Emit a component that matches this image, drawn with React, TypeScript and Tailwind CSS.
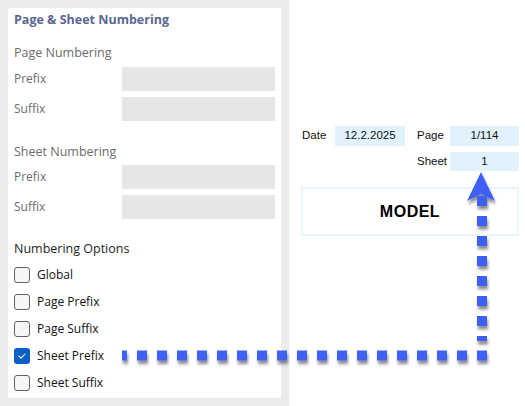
import React from 'react';

const sans = { fontFamily: '"Open Sans", "Noto Sans", sans-serif' };

function Field({ label }: { label: string }) {
  return (
    <div className="flex h-[24px] items-center">
      <span className="w-[108px] text-[12px] text-[#6b6b6b]">{label}</span>
      <div className="h-full w-[153px] bg-[#e6e6e6]" />
    </div>
  );
}

function Check({ label, checked = false }: { label: string; checked?: boolean }) {
  return (
    <div className="flex h-[27px] items-center gap-[7px]">
      {checked ? (
        <span className="flex h-[16px] w-[16px] items-center justify-center rounded-[3px] bg-[#0b5fc5]">
          <svg width="10" height="10" viewBox="0 0 10 10" fill="none">
            <path d="M2 5.2 L4.1 7.2 L8 3" stroke="white" strokeWidth="1.1" strokeLinecap="round" strokeLinejoin="round" />
          </svg>
        </span>
      ) : (
        <span className="h-[16px] w-[16px] rounded-[3px] border border-[#626262] bg-[#f6f6f6]" />
      )}
      <span className="text-[12px] text-[#111]">{label}</span>
    </div>
  );
}

function Arrow() {
  return (
    <svg className="pointer-events-none absolute left-0 top-0" width="525" height="406" viewBox="0 0 525 406">
      <defs>
        <filter id="shade" x="-50%" y="-50%" width="200%" height="200%">
          <feDropShadow dx="1" dy="3.5" stdDeviation="1.8" floodColor="#000" floodOpacity="0.45" />
        </filter>
      </defs>
      <g filter="url(#shade)" fill="#3f5ff7" stroke="#3f5ff7">
        <path d="M122 355.5 H487" strokeWidth="10" strokeDasharray="10 10" strokeDashoffset="5" fill="none" />
        <path d="M482 341 V196" strokeWidth="10" strokeDasharray="10 10" strokeDashoffset="5" fill="none" />
        <path d="M481 172 L495 201 L481 194 L467 201 Z" stroke="none" />
      </g>
    </svg>
  );
}

export default function App() {
  return (
    <div className="relative flex h-[406px] w-[525px] overflow-hidden bg-[#ebebeb]">
      <div className="w-[289px] p-[8px] pr-[8px]">
        <div className="h-[390px] w-[273px] bg-white px-[6px]" style={sans}>
          <div className="flex h-[24px] items-center text-[12.5px] font-bold text-[#5a6890]">
            Page &amp; Sheet Numbering
          </div>

          <div className="mt-[11px] flex h-[20px] items-center text-[12.5px] text-[#6b6b6b]">Page Numbering</div>
          <div className="mt-[4px] flex flex-col gap-[6px]">
            <Field label="Prefix" />
            <Field label="Suffix" />
          </div>

          <div className="mt-[21px] flex h-[20px] items-center text-[12.5px] text-[#6b6b6b]">Sheet Numbering</div>
          <div className="mt-[3px] flex flex-col gap-[6px]">
            <Field label="Prefix" />
            <Field label="Suffix" />
          </div>

          <div className="mt-[20px] flex h-[20px] items-center text-[12.5px] text-[#1e1e1e]">Numbering Options</div>
          <div className="mt-[2px]">
            <Check label="Global" />
            <Check label="Page Prefix" />
            <Check label="Page Suffix" />
            <Check label="Sheet Prefix" checked />
            <Check label="Sheet Suffix" />
          </div>
        </div>
      </div>

      <div
        className="flex-1 bg-white pl-[12px] pt-[126px] text-[11.5px] text-[#111]"
        style={{ fontFamily: '"Liberation Sans", Arial, sans-serif' }}
      >
        <div className="flex h-[20px] items-center">
          <span className="w-[34px] pl-[1px]">Date</span>
          <span className="flex h-full w-[70px] items-center justify-center bg-[#e1f2fd]">12.2.2025</span>
          <span className="ml-[12px] w-[33px]">Page</span>
          <span className="flex h-full w-[69px] items-center justify-center bg-[#e1f2fd]">1/114</span>
        </div>
        <div className="mt-[6px] flex h-[19px] items-center">
          <span className="ml-[116px] w-[33px]">Sheet</span>
          <span className="flex h-full w-[69px] items-center justify-center bg-[#e1f2fd]">1</span>
        </div>
        <div className="mt-[16px] flex h-[49px] w-[218px] items-center justify-center border-2 border-[#e9f5fd] text-[16px] font-bold tracking-[0.5px] text-black">
          MODEL
        </div>
      </div>

      <Arrow />
    </div>
  );
}
